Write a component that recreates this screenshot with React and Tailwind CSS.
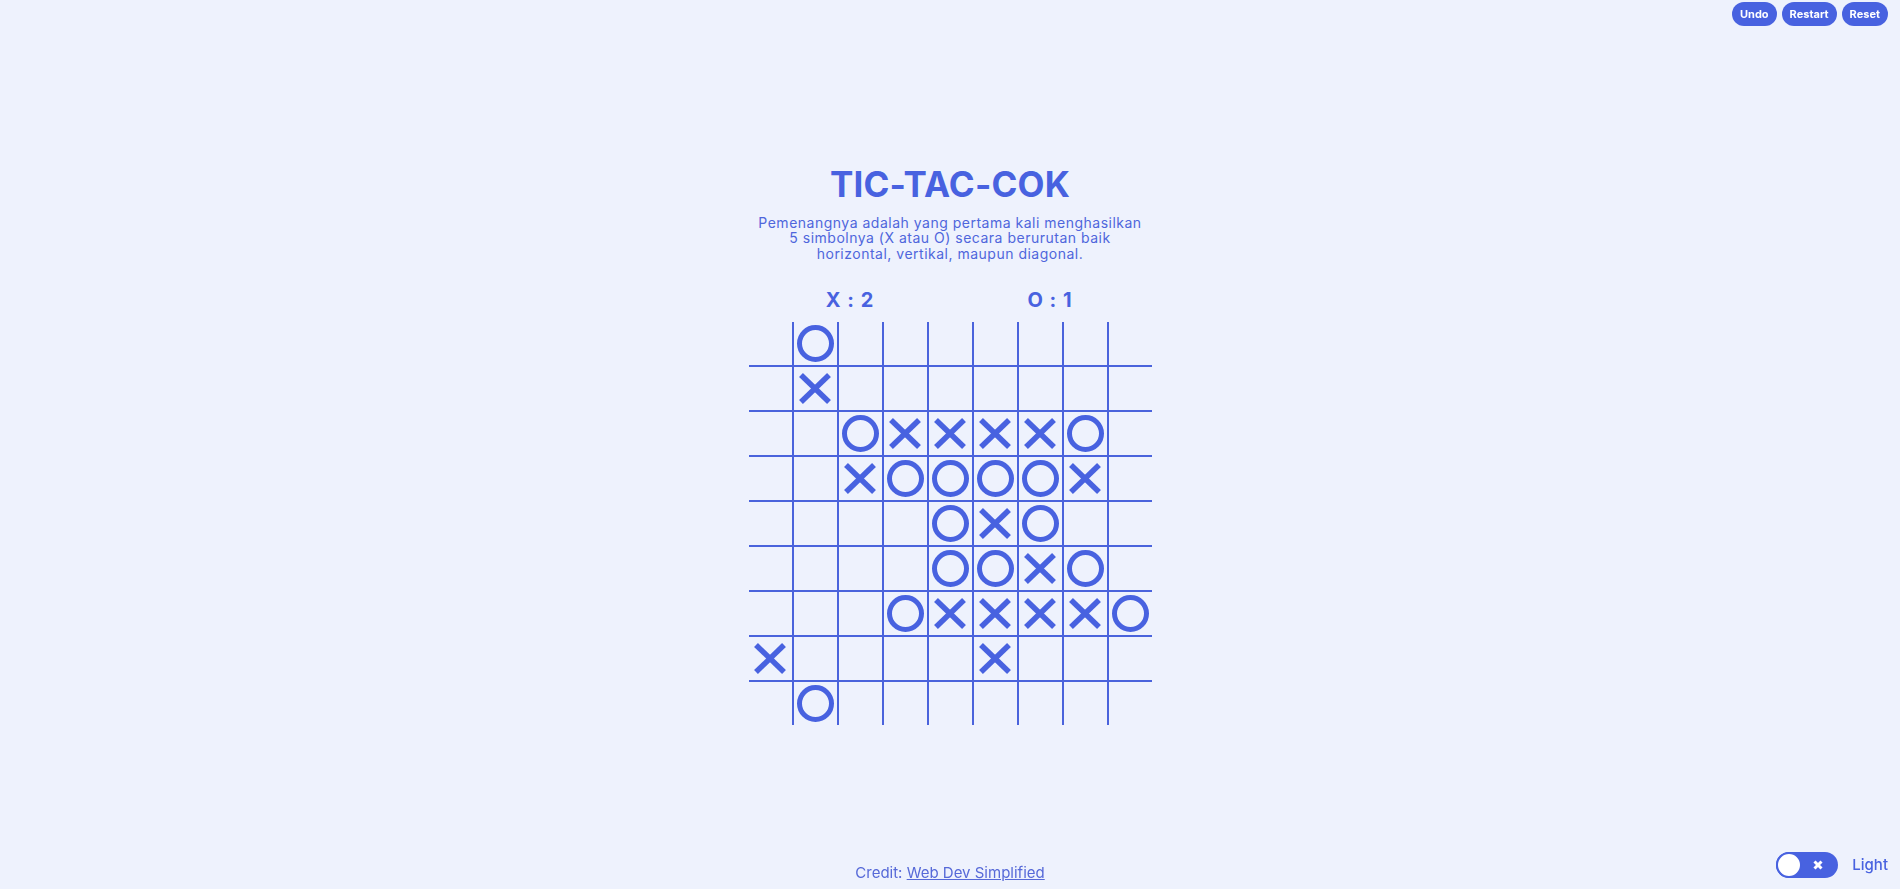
import { useState } from "react";

const BOARD = [
  "-O-------",
  "-X-------",
  "--OXXXXO-",
  "--XOOOOX-",
  "----OXO--",
  "----OOXO-",
  "---OXXXXO",
  "X----X---",
  "-O-------",
];

function Mark({ value }) {
  if (value === "O") {
    return <div className="w-[37px] h-[37px] rounded-full border-[5px] border-[#4862e0]" />;
  }
  if (value === "X") {
    return (
      <svg width="32" height="31" viewBox="0 0 32 31">
        <line x1="2" y1="2" x2="30" y2="29" stroke="#4862e0" strokeWidth="5.5" />
        <line x1="30" y1="2" x2="2" y2="29" stroke="#4862e0" strokeWidth="5.5" />
      </svg>
    );
  }
  return null;
}

export default function App() {
  const [board] = useState(BOARD.map((row) => row.split("")));
  const [light, setLight] = useState(true);

  return (
    <div
      className="relative h-screen w-full bg-[#eef2fd] text-[#4862e0] overflow-hidden"
      style={{ fontFamily: "Inter, 'Noto Sans', sans-serif" }}
    >
      {/* tombol atas */}
      <div className="fixed top-[2px] right-[12px] flex gap-[5px]">
        <button className="h-[24px] px-[8px] rounded-full bg-[#4862e0] text-white text-[11px] font-bold">
          Undo
        </button>
        <button className="h-[24px] px-[8px] rounded-full bg-[#4862e0] text-white text-[11px] font-bold">
          Restart
        </button>
        <button className="h-[24px] px-[8px] rounded-full bg-[#4862e0] text-white text-[11px] font-bold">
          Reset
        </button>
      </div>

      <main className="h-full flex flex-col items-center justify-center">
        <h1 className="text-[35px] leading-[40px] font-bold tracking-[0.2px]">TIC-TAC-COK</h1>
        <p className="mt-[11px] text-[14px] leading-[15.5px] text-center tracking-[0.5px] text-[#4f66dc]">
          Pemenangnya adalah yang pertama kali menghasilkan
          <br />
          5 simbolnya (X atau O) secara berurutan baik
          <br />
          horizontal, vertikal, maupun diagonal.
        </p>

        <div className="mt-[27px] w-[400px] flex text-[20px] leading-[24px] font-bold">
          <div className="flex-1 text-center tracking-[1px]">X : 2</div>
          <div className="flex-1 text-center tracking-[1px]">O : 1</div>
        </div>

        <div className="mt-[10px] grid grid-cols-[repeat(9,43px)] grid-rows-[repeat(9,43px)] gap-[2px] bg-[#4a63dc]">
          {board.map((row, r) =>
            row.map((cell, c) => (
              <div key={`${r}-${c}`} className="bg-[#eef2fd] flex items-center justify-center">
                <Mark value={cell} />
              </div>
            ))
          )}
        </div>
      </main>

      {/* footer */}
      <div className="fixed bottom-[5px] left-0 right-0 text-center text-[15px] text-[#5669d8]">
        Credit:{" "}
        <a href="#" className="underline">
          Web Dev Simplified
        </a>
      </div>

      <div className="fixed bottom-[11px] right-[12px] flex items-center gap-[14px]">
        <button
          onClick={() => setLight(!light)}
          className="relative w-[62px] h-[26px] rounded-full bg-[#4862e0] flex items-center"
        >
          <span className="absolute left-0 top-0 w-[26px] h-[26px] rounded-full bg-white border-[2px] border-[#4862e0]" />
          <svg className="absolute left-[37px] top-[8px]" width="10" height="10" viewBox="0 0 10 10">
            <line x1="1.5" y1="1.5" x2="8.5" y2="8.5" stroke="white" strokeWidth="3" />
            <line x1="8.5" y1="1.5" x2="1.5" y2="8.5" stroke="white" strokeWidth="3" />
          </svg>
        </button>
        <span className="text-[15px] font-medium">{light ? "Light" : "Dark"}</span>
      </div>
    </div>
  );
}
